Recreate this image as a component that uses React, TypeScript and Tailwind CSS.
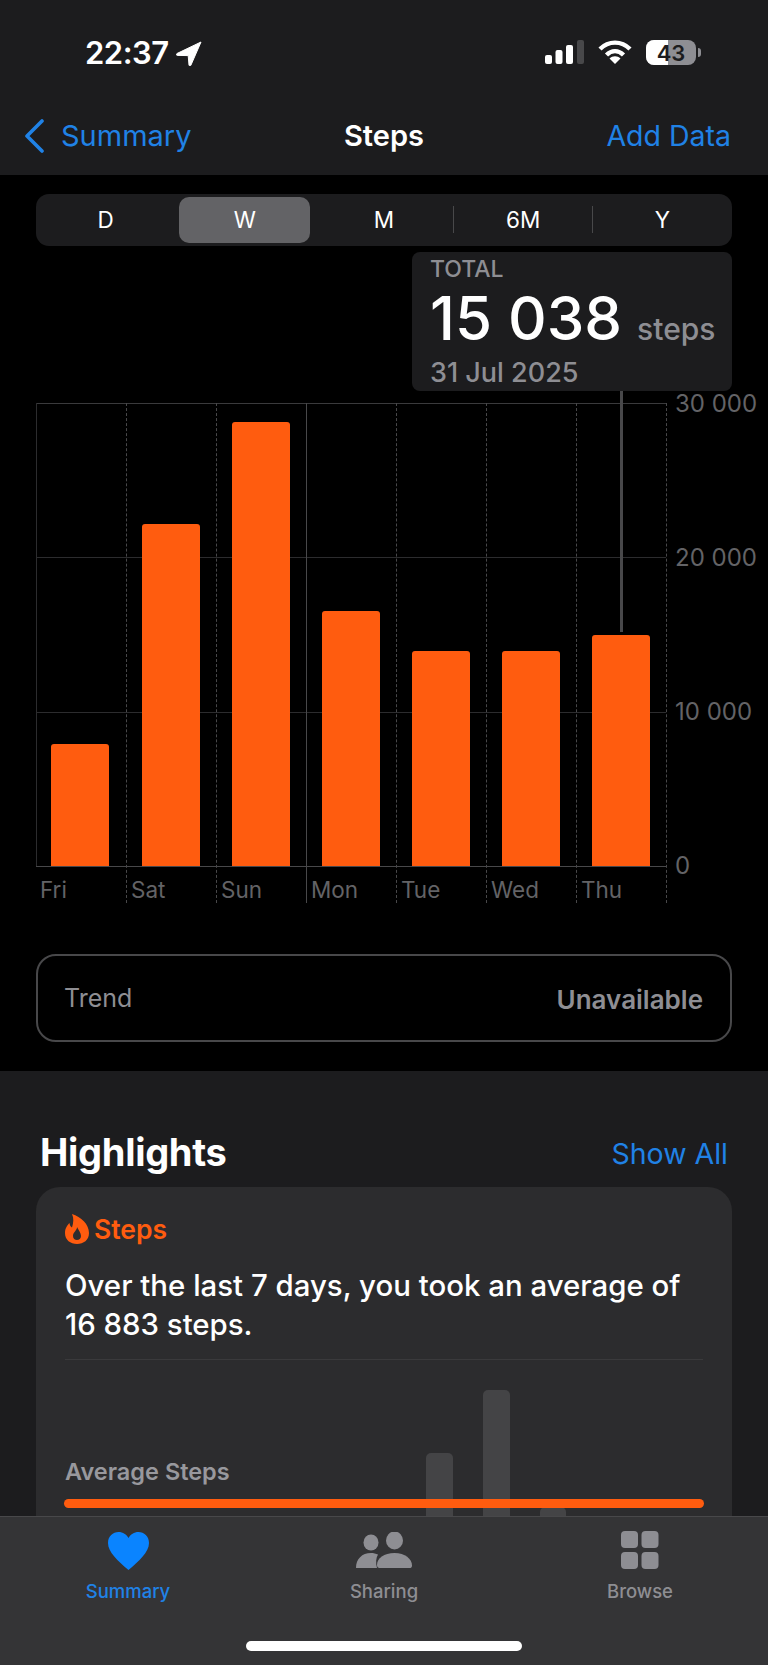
const BARS = [
  { day: 'Fri', height: 'h-[122px]' },
  { day: 'Sat', height: 'h-[342px]' },
  { day: 'Sun', height: 'h-[444px]' },
  { day: 'Mon', height: 'h-[255px]' },
  { day: 'Tue', height: 'h-[215px]' },
  { day: 'Wed', height: 'h-[215px]' },
  { day: 'Thu', height: 'h-[231px]' },
]

const RANGES = ['D', 'W', 'M', '6M', 'Y']

export default function App() {
  return (
    <div className="relative w-[768px] h-[1665px] overflow-hidden bg-black text-white font-['Inter',sans-serif]">
      <Header />

      <section className="h-[896px] px-[36px] pt-[19px]">
        <Segments />
        <Chart />
        <div className="mt-[51px] h-[88px] rounded-[20px] border-2 border-[#48484a] flex items-center justify-between pl-[26px] pr-[27px] pt-[2px] text-[25px] text-[#8e8e93]">
          <span>Trend</span>
          <span className="text-[26px] font-semibold">Unavailable</span>
        </div>
      </section>

      <section className="h-[594px] bg-[#1c1c1e] px-[36px]">
        <div className="h-[116px] flex items-end justify-between px-[4px] pb-[11px]">
          <h2 className="text-[38px] leading-[48px] font-bold tracking-[-0.3px]">Highlights</h2>
          <span className="text-[28.5px] leading-[44px] text-[#2082e6]">Show All</span>
        </div>
        <HighlightCard />
      </section>

      <TabBar />
    </div>
  )
}

function Header() {
  return (
    <header className="h-[175px] bg-[#1c1c1e]">
      <div className="h-[105px] flex items-start justify-between pl-[85px] pr-[67px] pt-[36px]">
        <div className="flex items-center gap-[7px]">
          <span className="text-[31px] leading-[34px] font-semibold tracking-[-0.5px]">22:37</span>
          <svg width="26" height="25" viewBox="0 0 26 25" fill="#fff">
            <path d="M25 1 L1 12.5 C0 13 .3 14.4 1.5 14.4 L12.2 14.6 L13 24 C13.1 25 14.4 25.2 14.9 24.2 Z" stroke="#fff" strokeWidth="1" strokeLinejoin="round" />
          </svg>
        </div>
        <StatusIcons />
      </div>
      <div className="h-[70px] grid grid-cols-3 items-center px-[24px] pb-[8px] text-[29px] text-[#2082e6]">
        <div className="flex items-center gap-[17px]">
          <svg width="20" height="34" viewBox="0 0 20 34" fill="none">
            <path d="M18 2 L3 17 L18 32" stroke="#2082e6" strokeWidth="3.6" strokeLinecap="round" strokeLinejoin="round" />
          </svg>
          <span>Summary</span>
        </div>
        <span className="text-center font-semibold text-white">Steps</span>
        <span className="text-right pr-[13px] text-[28.5px]">Add Data</span>
      </div>
    </header>
  )
}

function StatusIcons() {
  return (
    <div className="flex items-start gap-[14px] pt-[4px]">
      <svg width="39" height="24" viewBox="0 0 39 24">
        <rect x="0" y="15" width="7" height="9" rx="2" fill="#fff" />
        <rect x="10.5" y="10" width="7" height="14" rx="2" fill="#fff" />
        <rect x="21" y="5" width="7" height="19" rx="2" fill="#fff" />
        <rect x="32" y="0" width="7" height="24" rx="2" fill="#48484a" />
      </svg>
      <svg width="34" height="24" viewBox="0 0 34 24" fill="none" stroke="#fff" strokeWidth="4.4">
        <path d="M2 9 C10.5 0.5 23.5 0.5 32 9" />
        <path d="M8.5 15 C13.5 9.8 20.5 9.8 25.5 15" />
        <path d="M17 24 L11.5 18.4 C14.6 15.6 19.4 15.6 22.5 18.4 Z" fill="#fff" stroke="none" />
      </svg>
      <div className="flex items-center gap-[2px]">
        <div className="relative w-[50px] h-[25px] rounded-[8px] overflow-hidden bg-[#8e8e93] flex items-center justify-center">
          <div className="absolute inset-y-0 left-0 w-[22px] bg-white" />
          <span className="relative text-[22px] leading-none font-semibold text-[#1c1c1e]">43</span>
        </div>
        <div className="w-[3px] h-[9px] rounded-r-full bg-[#8e8e93]" />
      </div>
    </div>
  )
}

function Segments() {
  return (
    <div className="h-[52px] rounded-[13px] bg-[#1c1c1e] grid grid-cols-5 items-center text-[22.5px]">
      {RANGES.map((r, i) => (
        <div key={r} className="relative h-full flex items-center justify-center">
          {r === 'W' && <div className="absolute inset-x-[4px] inset-y-[3px] rounded-[10px] bg-[#636366]" />}
          <span className="relative">{r}</span>
          {i >= 2 && i < 4 && <div className="absolute right-0 top-[12px] h-[27px] w-px bg-[#48484a]" />}
        </div>
      ))}
    </div>
  )
}

function Chart() {
  return (
    <div className="relative mt-[157px] flex">
      {/* tooltip sits over the plot */}
      <div className="absolute right-0 top-[-151px] w-[320px] h-[139px] z-10 rounded-[8px] bg-[#1c1c1e] pl-[18px]">
        <p className="pt-[4px] text-[23px] leading-[26px] font-medium text-[#8e8e93]">TOTAL</p>
        <p className="flex items-baseline gap-[15px] h-[70px]">
          <span className="text-[60px] leading-[72px] font-medium">15 038</span>
          <span className="text-[30px] font-medium text-[#8e8e93]">steps</span>
        </p>
        <p className="pt-[5px] text-[27px] leading-[32px] font-medium text-[#8e8e93]">31 Jul 2025</p>
        <div className="absolute top-full left-[208px] w-[3px] h-[241px] bg-[#48484a]" />
      </div>

      <div className="relative shrink-0 w-[631px] h-[500px] grid grid-cols-7 border-r border-dashed border-[#48484a]">
        <div className="absolute inset-x-0 top-0 h-[464px] flex flex-col justify-between">
          <div className="h-px bg-[#3a3a3c]" />
          <div className="h-px bg-[#2c2c2e]" />
          <div className="h-px bg-[#2c2c2e]" />
          <div className="h-px bg-[#48484a]" />
        </div>
        {BARS.map((b, i) => (
          <div
            key={b.day}
            className={`relative ${i === 0 ? '' : i === 3 ? 'border-l border-[#48484a]' : 'border-l border-dashed border-[#48484a]'}`}
          >
            <div className={`h-[463px] flex items-end ${i === 0 ? 'border-l border-[#2c2c2e] pl-[14px]' : 'pl-[15px]'}`}>
              <div className={`relative w-[58px] rounded-t-[3px] bg-[#ff5c0f] ${b.height}`} />
            </div>
            <span className={`block pt-[11px] text-[22.5px] leading-[26px] text-[#636366] ${i === 0 ? 'pl-[4px]' : 'pl-[4px]'}`}>{b.day}</span>
          </div>
        ))}
      </div>

      <div className="h-[463px] pt-[1px] flex flex-col justify-between pl-[8px] text-[24px] text-[#636366]">
        {['30 000', '20 000', '10 000', '0'].map(v => (
          <span key={v} className="h-0 flex items-center whitespace-nowrap">{v}</span>
        ))}
      </div>
    </div>
  )
}

function HighlightCard() {
  return (
    <div className="rounded-[24px] bg-[#2c2c2e] h-[400px] pl-[29px] pr-[29px] pt-[25px]">
      <div className="flex items-center gap-[5px] text-[26.5px] leading-[34px] font-semibold text-[#ff5c0f]">
        <svg width="24" height="30" viewBox="0 0 24 30" fill="#ff5c0f">
          <path
            fillRule="evenodd"
            d="M7 0 C16 3 24 10 24 19 C24 26 18.5 30 12 30 C5.5 30 0 26 0 19 C0 14 2.5 11 4.5 9 C4.8 11 5.5 12.5 7 13.5 C8.5 9 9 4 7 0 Z M12 13 C12.5 16 8 18 8 22 C8 24.5 9.8 26 12 26 C14.2 26 16 24.5 16 22 C16 19 13.5 16 12 13 Z"
          />
        </svg>
        <span>Steps</span>
      </div>
      <p className="mt-[20px] text-[29.4px] leading-[39px] font-medium">
        Over the last 7 days, you took an average of
        <br />
        16 883 steps.
      </p>
      <div className="mt-[15px] h-px bg-[#3a3a3c]" />
      <div className="relative h-[170px]">
        <div className="absolute left-[361px] top-[93px] w-[27px] h-[77px] rounded-t-[5px] bg-[#444446]" />
        <div className="absolute left-[418px] top-[30px] w-[27px] h-[140px] rounded-t-[5px] bg-[#444446]" />
        <div className="absolute left-[475px] top-[147px] w-[26px] h-[23px] rounded-t-[5px] bg-[#444446]" />
        <span className="absolute left-0 top-[97px] text-[23.5px] leading-[30px] font-semibold text-[#98989d]">Average Steps</span>
        <div className="absolute -left-px -right-px top-[139px] h-[9px] rounded-full bg-[#ff5c0f]" />
      </div>
    </div>
  )
}

function TabBar() {
  return (
    <nav className="absolute inset-x-0 bottom-0 h-[149px] border-t border-[#48484a] bg-[#343436] grid grid-cols-3 text-[18.5px] font-medium text-[#8e8e93]">
      <div className="flex flex-col items-center pt-[15px]">
        <svg width="41" height="38" viewBox="0 0 41 38" fill="#0a84ff">
          <path d="M20.5 38 C10 29 0 20 0 11 C0 4 5 0 10.5 0 C15 0 18.5 2.5 20.5 6 C22.5 2.5 26 0 30.5 0 C36 0 41 4 41 11 C41 20 31 29 20.5 38 Z" />
        </svg>
        <span className="mt-[8px] text-[#2082e6]">Summary</span>
      </div>
      <div className="flex flex-col items-center pt-[15px]">
        <svg width="56" height="38" viewBox="0 0 56 38" fill="#8e8e93">
          <ellipse cx="15" cy="10.5" rx="7.5" ry="8" />
          <ellipse cx="38.5" cy="8.5" rx="8.5" ry="9" />
          <path d="M0 36 C0 27 6 21 15 21 C17.5 21 20 21.6 22 22.6 C20 26 19.5 31 21 36 Z" />
          <path d="M21 33 C21 26 28 21 38.5 21 C49 21 56 27 56 33.5 C56 35.5 55 36 53.5 36 L23.5 36 C22 36 21 35 21 33 Z" />
        </svg>
        <span className="mt-[8px]">Sharing</span>
      </div>
      <div className="flex flex-col items-center pt-[14px]">
        <svg width="38" height="39" viewBox="0 0 38 39" fill="#8e8e93">
          <rect x="0" y="0" width="17" height="17" rx="4" />
          <rect x="20.5" y="0" width="17" height="17" rx="4" />
          <rect x="0" y="21" width="17" height="17" rx="4" />
          <rect x="20.5" y="21" width="17" height="17" rx="4" />
        </svg>
        <span className="mt-[8px]">Browse</span>
      </div>
      <div className="absolute left-[246px] bottom-[14px] w-[276px] h-[10px] rounded-full bg-white" />
    </nav>
  )
}
